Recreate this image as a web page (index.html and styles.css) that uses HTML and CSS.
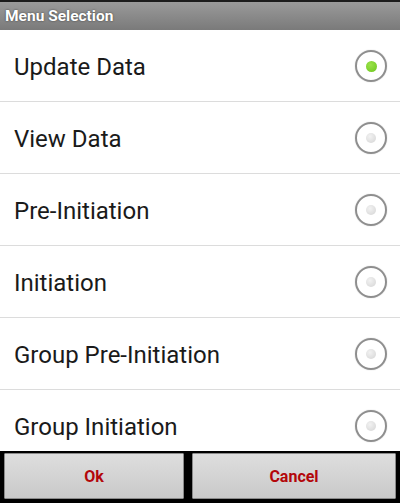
FILE: index.html
```html
<!DOCTYPE html>
<html>
<head>
<meta charset="utf-8">
<link rel="stylesheet" href="styles.css">
</head>
<body>
<div class="screen">
  <div class="topstrip"></div>
  <div class="header">Menu Selection</div>
  <div class="list">
    <div class="row"><span class="label">Update Data</span><span class="radio on"><span class="dot"></span></span></div>
    <div class="row"><span class="label">View Data</span><span class="radio"><span class="dot"></span></span></div>
    <div class="row"><span class="label">Pre-Initiation</span><span class="radio"><span class="dot"></span></span></div>
    <div class="row"><span class="label">Initiation</span><span class="radio"><span class="dot"></span></span></div>
    <div class="row"><span class="label">Group Pre-Initiation</span><span class="radio"><span class="dot"></span></span></div>
    <div class="row"><span class="label">Group Initiation</span><span class="radio"><span class="dot"></span></span></div>
  </div>
  <div class="footer">
    <button class="btn ok">Ok</button>
    <button class="btn cancel">Cancel</button>
  </div>
</div>
</body>
</html>
```
FILE: styles.css
```css
html, body {
  margin: 0;
  padding: 0;
  background: #fff;
}
.screen {
  width: 400px;
  height: 503px;
  display: flex;
  flex-direction: column;
  font-family: Roboto, "Noto Sans", sans-serif;
  overflow: hidden;
}
.topstrip {
  height: 2px;
  background: #1c1c1c;
  flex: none;
}
.header {
  height: 28px;
  flex: none;
  box-sizing: border-box;
  background: linear-gradient(#9a9a9a, #7a7a7a);
  color: #fff;
  font-weight: bold;
  font-size: 15.5px;
  line-height: 28px;
  padding-left: 5px;
  text-shadow: 0 0 2px rgba(0,0,0,0.6);
}
.list {
  flex: 1;
  overflow: hidden;
  background: #fff;
}
.row {
  height: 71px;
  border-bottom: 1px solid #dcdcdc;
  display: flex;
  align-items: center;
  justify-content: space-between;
  padding: 0 13px 0 14px;
}
.label {
  font-size: 24px;
  color: #1a1a1a;
  padding-top: 2px;
}
.radio {
  width: 28px;
  height: 28px;
  border-radius: 50%;
  border: 2px solid #8e8e8e;
  display: flex;
  align-items: center;
  justify-content: center;
  box-shadow: 0 0 1px #aaa;
  margin-top: 1px;
}
.dot {
  width: 10px;
  height: 10px;
  border-radius: 50%;
  background: radial-gradient(circle at 40% 35%, #f2f2f2, #d4d4d4);
}
.radio.on .dot {
  width: 11px;
  height: 11px;
  background: radial-gradient(circle at 40% 35%, #9be24a, #6cc61c);
}
.footer {
  height: 52px;
  flex: none;
  background: #000;
  display: flex;
  gap: 8px;
  padding: 2px 4px 4px 4px;
  box-sizing: border-box;
}
.btn {
  height: 46px;
  border: 1px solid #8a8a8a;
  border-radius: 1px;
  background: linear-gradient(#dedede, #c9c9c9);
  color: #b3060a;
  font-family: Roboto, "Noto Sans", sans-serif;
  font-weight: bold;
  font-size: 16px;
  padding: 0;
  margin: 0;
}
.ok { width: 180px; }
.cancel { width: 204px; }
```
